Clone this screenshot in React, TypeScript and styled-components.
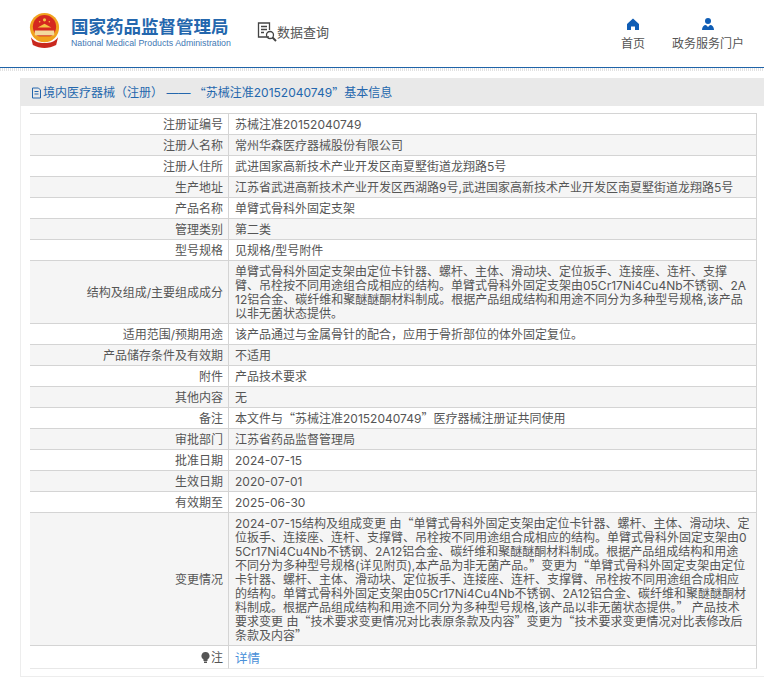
import React from 'react';
import styled, { createGlobalStyle } from 'styled-components';

const GlobalStyle = createGlobalStyle`
  html, body {
    margin: 0;
    padding: 0;
    background: #fff;
    overflow: hidden;
  }
  body {
    font-family: Inter, "Noto Sans CJK SC", sans-serif;
    font-size: 12px;
    color: #555;
  }
`;

const Page = styled.div`
  width: 764px;
  height: 677px;
  overflow: hidden;
`;

const Header = styled.header`
  height: 67px;
  display: flex;
  align-items: flex-start;
  border-bottom: 1px solid #1f63a8;
`;

const Emblem = styled.svg`
  width: 33px;
  height: 35px;
  margin: 13px 0 0 28px;
  flex-shrink: 0;
`;

const Brand = styled.div`
  margin: 16px 0 0 10px;
  width: 160px;
  font-family: "Liberation Sans", "Noto Sans CJK SC", sans-serif;
`;

const BrandName = styled.div`
  font-size: 17.5px;
  line-height: 22px;
  font-weight: 700;
  color: #2467ad;
  white-space: nowrap;
`;

const BrandSub = styled.div`
  font-size: 8.8px;
  line-height: 10px;
  color: #3f78b4;
  white-space: nowrap;
`;

const QueryLink = styled.div`
  margin: 22px 0 0 26px;
  display: flex;
  align-items: center;
  font-size: 13px;
  line-height: 18px;
  color: #555;
`;

const Nav = styled.nav`
  margin-left: auto;
  margin-right: 20px;
  padding-top: 18px;
  display: flex;
  gap: 27px;
`;

const NavItem = styled.div`
  display: flex;
  flex-direction: column;
  align-items: center;
  gap: 6px;
  font-size: 12px;
  line-height: 16px;
  color: #555;
`;

const Dither = styled.div`
  height: 3px;
  background: repeating-linear-gradient(90deg, #e2e2e2 0 1px, #fff 1px 2px);
`;

const Panel = styled.section`
  margin: 7px 0 0 20px;
  border-left: 1px solid #ededed;
  border-bottom: 1px solid #ededed;
  height: 598px;
`;

const PanelTitle = styled.div`
  height: 27px;
  line-height: 27px;
  margin-left: -1px;
  padding: 1px 0 0 11px;
  background: #e9e9e9;
  color: #2467ad;
  font-size: 12px;
  display: flex;
  align-items: center;
  white-space: pre;
`;

const TitleIcon = styled.svg`
  width: 11px;
  height: 12px;
  margin-right: 1px;
`;

const Table = styled.table`
  margin: 7px 0 0 9px;
  width: 727px;
  border-collapse: separate;
  border-spacing: 0;
  table-layout: fixed;
`;

const Row = styled.tr`
  &:nth-child(even) {
    background: #f5f5f5;
  }
  &:first-child th,
  &:first-child td {
    border-top: 1px solid #d4d4d4;
  }
  &:last-child th,
  &:last-child td {
    border-bottom-color: #e8e8e8;
  }
`;

const Label = styled.th`
  width: 193px;
  padding: 4px 5px 2px 0;
  text-align: right;
  font-weight: 400;
  font-size: 12px;
  line-height: 14px;
  color: #555;
  border-bottom: 1px solid #d4d4d4;
  border-right: 1px solid #d4d4d4;
`;

const Value = styled.td`
  padding: 4px 6px 2px;
  font-size: 12px;
  line-height: 14px;
  color: #555;
  word-break: break-all;
  border-bottom: 1px solid #d4d4d4;
  border-right: 1px solid #d4d4d4;
`;

// line-height 0 keeps the other font from stretching the line box
const Quote = styled.span`
  font-family: "Noto Sans CJK SC", sans-serif;
  line-height: 0;
`;

const DetailLink = styled.a`
  display: block;
  padding-top: 2px;
  color: #4a90d9;
  font-size: 12.500px;
  line-height: 14px;
`;

const Bulb = styled.svg`
  width: 9px;
  height: 11px;
  margin-right: 1px;
  vertical-align: -1px;
`;

// quotes have to come from the CJK font to get their full width
const withQuotes = (text: string) =>
  text.split(/([“”])/).map((part, i) => (part === '“' || part === '”' ? <Quote key={i}>{part}</Quote> : part));

const rows: { label: string; value: string }[] = [
  { label: '注册证编号', value: '苏械注准20152040749' },
  { label: '注册人名称', value: '常州华森医疗器械股份有限公司' },
  { label: '注册人住所', value: '武进国家高新技术产业开发区南夏墅街道龙翔路5号' },
  { label: '生产地址', value: '江苏省武进高新技术产业开发区西湖路9号,武进国家高新技术产业开发区南夏墅街道龙翔路5号' },
  { label: '产品名称', value: '单臂式骨科外固定支架' },
  { label: '管理类别', value: '第二类' },
  { label: '型号规格', value: '见规格/型号附件' },
  {
    label: '结构及组成/主要组成成分',
    value:
      '单臂式骨科外固定支架由定位卡针器、螺杆、主体、滑动块、定位扳手、连接座、连杆、支撑臂、吊栓按不同用途组合成相应的结构。单臂式骨科外固定支架由05Cr17Ni4Cu4Nb不锈钢、2A12铝合金、碳纤维和聚醚醚酮材料制成。根据产品组成结构和用途不同分为多种型号规格,该产品以非无菌状态提供。',
  },
  { label: '适用范围/预期用途', value: '该产品通过与金属骨针的配合，应用于骨折部位的体外固定复位。' },
  { label: '产品储存条件及有效期', value: '不适用' },
  { label: '附件', value: '产品技术要求' },
  { label: '其他内容', value: '无' },
  { label: '备注', value: '本文件与“苏械注准20152040749”医疗器械注册证共同使用' },
  { label: '审批部门', value: '江苏省药品监督管理局' },
  { label: '批准日期', value: '2024-07-15' },
  { label: '生效日期', value: '2020-07-01' },
  { label: '有效期至', value: '2025-06-30' },
  {
    label: '变更情况',
    value:
      '2024-07-15结构及组成变更 由“单臂式骨科外固定支架由定位卡针器、螺杆、主体、滑动块、定位扳手、连接座、连杆、支撑臂、吊栓按不同用途组合成相应的结构。单臂式骨科外固定支架由05Cr17Ni4Cu4Nb不锈钢、2A12铝合金、碳纤维和聚醚醚酮材料制成。根据产品组成结构和用途不同分为多种型号规格(详见附页),本产品为非无菌产品。”变更为“单臂式骨科外固定支架由定位卡针器、螺杆、主体、滑动块、定位扳手、连接座、连杆、支撑臂、吊栓按不同用途组合成相应的结构。单臂式骨科外固定支架由05Cr17Ni4Cu4Nb不锈钢、2A12铝合金、碳纤维和聚醚醚酮材料制成。根据产品组成结构和用途不同分为多种型号规格,该产品以非无菌状态提供。” 产品技术要求变更 由“技术要求变更情况对比表原条款及内容”变更为“技术要求变更情况对比表修改后条款及内容”',
  },
];

export default function App() {
  return (
    <Page>
      <GlobalStyle />
      <Header>
        <Emblem viewBox="0 0 34 36">
          <circle cx="17" cy="15" r="15" fill="#f0a21e" />
          <circle cx="17" cy="14" r="12" fill="#d5281f" />
          <path d="M7 18h20v5H7z" fill="#f3d9a0" />
          <path d="M10 15l7-4 7 4z" fill="#f6c445" />
          <circle cx="17" cy="7" r="1.6" fill="#f6c445" />
          <circle cx="12" cy="9" r="0.8" fill="#f6c445" />
          <circle cx="22" cy="9" r="0.8" fill="#f6c445" />
          <path d="M3 25c4 5 8 6 14 6s10-1 14-6l-2 8c-4 2-8 3-12 3s-8-1-12-3z" fill="#c9281e" />
          <path d="M9 24h16v4H9z" fill="#f0a21e" />
        </Emblem>
        <Brand>
          <BrandName>国家药品监督管理局</BrandName>
          <BrandSub>National Medical Products Administration</BrandSub>
        </Brand>
        <QueryLink>
          <svg width="20" height="20" viewBox="0 0 20 20" fill="none" stroke="#444" strokeWidth="1.3">
            <path d="M12 15H1.500V1h11v7" />
            <path d="M4 4.500h6M4 7.500h6M4 10.500h3" />
            <circle cx="13" cy="13" r="3.500" />
            <path d="M15.500 15.500L19 19" strokeWidth="2" />
          </svg>
          数据查询
        </QueryLink>
        <Nav>
          <NavItem>
            <svg width="12" height="12" viewBox="0 0 12 12" fill="#0f5db5">
              <path d="M6 .5L12 6v6H8V8.500H4V12H0V6z" />
            </svg>
            首页
          </NavItem>
          <NavItem>
            <svg width="12" height="12" viewBox="0 0 12 12" fill="#0f5db5">
              <circle cx="6" cy="3" r="3" />
              <path d="M0 12c0-3 1.500-5 4-5l2 2 2-2c2.500 0 4 2 4 5z" />
            </svg>
            政务服务门户
          </NavItem>
        </Nav>
      </Header>
      <Dither />
      <Panel>
        <PanelTitle>
          <TitleIcon viewBox="0 0 11 12" fill="none" stroke="#2467ad">
            <path d="M1.500 1h6l2 2v8h-8z" />
            <path d="M3.500 4.500h4M3.500 7h4" />
          </TitleIcon>
          境内医疗器械（注册） —— <Quote>“</Quote>苏械注准20152040749<Quote>”</Quote>基本信息
        </PanelTitle>
        <Table>
          <tbody>
            {rows.map(r => (
              <Row key={r.label}>
                <Label>{r.label}</Label>
                <Value>{withQuotes(r.value)}</Value>
              </Row>
            ))}
            <Row>
              <Label>
                <Bulb viewBox="0 0 9 11" fill="#555">
                  <path d="M4.500 0a4 4 0 0 1 2 7.500V9h-4V7.500a4 4 0 0 1 2-7.500zM3 9.500h3V11H3z" />
                </Bulb>
                注
              </Label>
              <Value>
                <DetailLink>详情</DetailLink>
              </Value>
            </Row>
          </tbody>
        </Table>
      </Panel>
    </Page>
  );
}
